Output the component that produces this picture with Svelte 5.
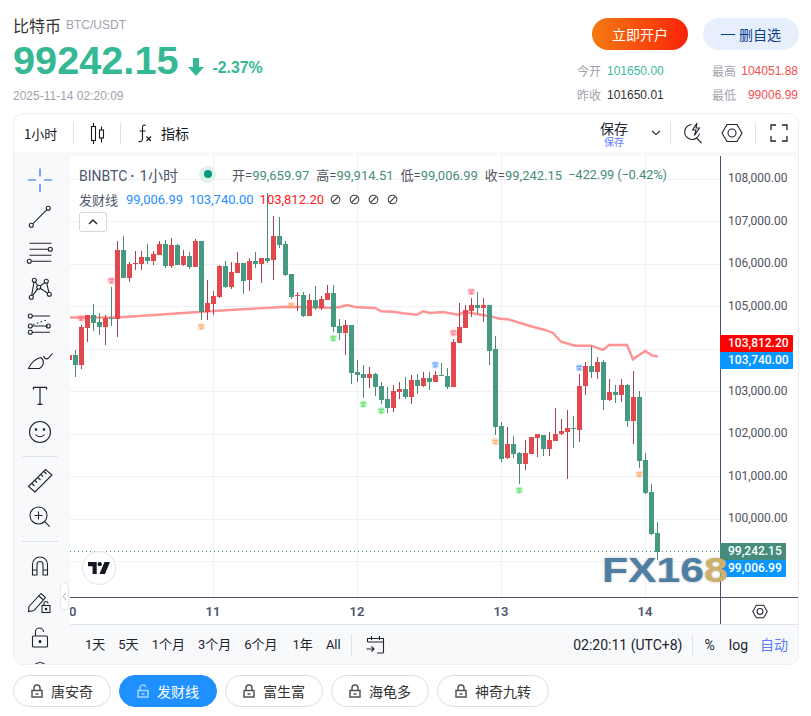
<script>
  const seg = (start, base, rows) =>
    rows.map((r, k) => ({
      x: 73 + 6 * (start + k),
      wt: base + r[0] / 3, bt: base + r[1] / 3, bb: base + r[2] / 3, wb: base + r[3] / 3,
      up: r[4] === 'r'
    }));

  const candles = [
    ...seg(-1, 200, [[465,465,480,480,'r']]),
    ...seg(0, 200, [
      [450,465,495,530,'g'],[375,381,495,506,'r'],[345,345,383,425,'r'],[312,345,369,392,'g'],
      [340,366,381,405,'g'],[345,354,381,435,'r'],[262,354,357,378,'g'],[123,150,357,411,'r'],
      [108,150,234,234,'g'],[186,192,234,246,'r'],[153,189,192,210,'r'],[153,171,192,210,'r'],
      [132,171,183,192,'g'],[153,162,183,195,'r'],[123,132,165,165,'r'],[120,132,198,204,'g'],
      [114,135,198,204,'r'],[132,135,195,195,'g'],[150,168,195,198,'r'],[156,168,201,207,'g'],
      [117,123,201,201,'r'],[123,123,336,360,'g'],[240,309,336,360,'r'],[273,288,312,345,'r'],
      [195,198,291,294,'r'],[183,198,261,264,'g'],[186,216,261,267,'r'],[156,189,219,219,'r'],
      [189,189,243,282,'g'],[174,183,240,273,'r'],[156,183,192,204,'g'],[174,174,192,249,'r'],
      [-22,174,183,189,'g'],[48,108,180,240,'r'],[51,108,135,144,'g'],[123,132,225,228,'g'],
      [222,222,291,297,'g'],[276,285,288,333,'r'],[276,285,348,351,'g'],[282,300,348,348,'r'],
      [258,300,324,330,'g'],[288,297,324,330,'r'],[255,279,300,300,'r']
    ]),
    ...seg(43, 280, [
      [15,39,141,157,'g'],[117,138,159,180,'g'],[120,135,159,225,'r'],[135,135,279,312,'g'],
      [240,276,285,306,'g'],[255,282,294,354,'g'],[261,282,294,324,'r'],[279,282,321,348,'g'],
      [306,318,360,372,'g'],[321,357,384,399,'g'],[315,333,384,396,'r'],[306,327,336,357,'r'],
      [291,327,351,357,'g'],[285,300,351,372,'r'],[282,300,318,342,'g'],[276,294,318,321,'r'],
      [276,294,306,330,'g'],[273,285,306,306,'r'],[249,285,288,288,'g'],[264,288,321,327,'g'],
      [177,186,321,321,'r'],[69,141,189,189,'r'],[75,90,144,144,'r'],[54,75,93,111,'r'],
      [36,75,84,102,'g'],[54,75,84,126,'r'],[75,75,213,255,'g'],[168,207,441,465,'g'],
      [426,438,537,546,'g'],[441,492,534,537,'r']
    ]),
    ...seg(73, 330, [
      [318,342,372,384,'g'],[366,369,402,462,'g'],[330,369,402,420,'r'],[321,321,372,372,'r'],
      [312,312,324,381,'r'],[315,315,357,378,'g'],[306,330,357,378,'r'],[234,312,333,333,'r'],
      [267,303,312,315,'r'],[240,294,306,447,'r'],[258,294,297,354,'g'],[132,168,300,336,'r'],
      [96,108,168,195,'r'],[48,108,126,144,'g'],[81,96,126,147,'r'],[90,96,210,240,'g'],
      [147,186,210,213,'r'],[165,186,195,219,'g'],[147,165,195,216,'r'],[162,165,273,291,'g'],
      [123,201,273,342,'r'],[183,201,393,414,'g'],[369,390,489,492,'g'],[462,486,612,615,'g'],
      [576,609,665,690,'g']
    ])
  ];

  const linePts = [
    [70,317.5],[117,317.5],[213,311],[287,306.7],[330,307.7],[340,307],[347,305],[357,307.3],
    [375,308],[381,311.3],[393,311.7],[403,313.3],[417,314.7],[423,311.3],[430,313],[443,312],
    [458,314.7],[465,312],[477,314],[487,315.7],[500,318.7],[508,319.3],[530,326],[545,330],
    [553,333],[561,341.7],[575,345.7],[591,345.7],[603,350],[609,345],[627,345],[633,359.3],
    [645,351],[652,355.3],[658,356.7]
  ].map((p) => p.join(',')).join(' ');

  const markers = [
    [111.3,280.7,'#ff6b7a'],[81.3,318.3,'#ff6b7a'],[453.3,332.7,'#ff6b7a'],[471.3,291.7,'#ff6b7a'],
    [201.3,326.7,'#ffa35c'],[291.3,305.3,'#ffa35c'],[495.3,441.7,'#ffa35c'],[639.3,474.3,'#ffa35c'],
    [333.3,338.3,'#4fe05a'],[363.3,404.3,'#4fe05a'],[381.3,410.7,'#4fe05a'],[519.3,490.3,'#4fe05a'],
    [435.3,364.7,'#5b9dff'],[579.3,367.7,'#5b9dff']
  ];

  const hGrid = [179, 221, 264, 306, 349, 391.5, 434, 476, 519, 561];
  const vGrid = [213, 357, 501, 645];
  const prices = ['108,000.00','107,000.00','106,000.00','105,000.00','104,000.00','103,000.00','102,000.00','101,000.00','100,000.00'];
  const days = ['10','11','12','13','14'];
  const ranges = ['1天','5天','1个月','3个月','6个月','1年','All'];
  const pills = [
    { t: '唐安奇', w: 98 }, { t: '发财线', w: 98, on: true }, { t: '富生富', w: 98 },
    { t: '海龟多', w: 98 }, { t: '神奇九转', w: 112 }
  ];
</script>

<div class="page">
  <header class="head">
    <div class="info">
      <div class="name"><span class="cn">比特币</span><span class="pair">BTC/USDT</span></div>
      <div class="quote">
        <span class="price">99242.15</span>
        <svg class="arrow" width="16" height="18" viewBox="0 0 16 18"><path d="M5 0h6v9h5l-8 9-8-9h5z" fill="#35b894"/></svg>
        <span class="chg">-2.37%</span>
      </div>
      <div class="date">2025-11-14 02:20:09</div>
    </div>
    <div class="side">
      <div class="btns">
        <button class="btn open">立即开户</button>
        <button class="btn fav"><span class="dash"></span>删自选</button>
      </div>
      <div class="stats">
        <div class="stat s1"><span class="k">今开</span><span class="teal">101650.00</span></div>
        <div class="stat s2"><span class="k">最高</span><span class="red">104051.88</span></div>
        <div class="stat s1"><span class="k">昨收</span><span class="dark">101650.01</span></div>
        <div class="stat s2 low"><span class="k">最低</span><span class="red">99006.99</span></div>
      </div>
    </div>
  </header>

  <section class="panel">
    <div class="top">
      <span class="tf">1小时</span>
      <i class="sep s-a"></i>
      <svg class="ic candle" width="18" height="22" viewBox="0 0 18 22" fill="none" stroke="#131722" stroke-width="1.1">
        <rect x="2.5" y="4.5" width="4" height="14"/><path d="M4.5 1v3.5M4.5 18.5V22"/>
        <rect x="10.5" y="8" width="4" height="8"/><path d="M12.5 4.500v3.500M12.500 16v4.500"/>
      </svg>
      <i class="sep s-b"></i>
      <svg class="ic fx" width="16" height="19" viewBox="0 0 16 19" fill="none" stroke="#131722" stroke-width="1.1">
        <path d="M8.500 1.500C6.500.500 5.500 1.500 5.500 3.500v11c0 2.500-1.500 3.500-4 3M2.500 7h6"/><path d="M9.500 12.500l4.500 4.500M14 12.500l-4.500 4.500"/>
      </svg>
      <span class="ind">指标</span>
      <span class="grow"></span>
      <div class="save"><span class="a">保存</span><span class="b">保存</span></div>
      <svg class="chev" width="10" height="6" viewBox="0 0 10 6" fill="none" stroke="#333" stroke-width="1.100"><path d="M1 1l4 3.500L9 1"/></svg>
      <i class="sep s-c"></i>
      <svg class="ic flash" width="20" height="22" viewBox="0 0 20 22" fill="none" stroke="#20232e" stroke-width="1.100">
        <path d="M8.500 2.500a7.500 7.500 0 1 0 8 9"/><path d="M13.500 16l5 5"/>
        <path d="M14 1l-4.500 7h3.500l-1.500 5.500 5-7.500h-3.500z"/>
      </svg>
      <svg class="ic hex" width="22" height="20" viewBox="0 0 22 20" fill="none" stroke="#20232e" stroke-width="1.100">
        <path d="M1 10l5-8.500h10l5 8.500-5 8.500H6z"/><circle cx="11" cy="10" r="4"/>
      </svg>
      <i class="sep s-d"></i>
      <svg class="ic full" width="18" height="18" viewBox="0 0 18 18" fill="none" stroke="#20232e" stroke-width="1.300">
        <path d="M1 6V1h5M12 1h5v5M17 12v5h-5M6 17H1v-5"/>
      </svg>
    </div>

    <div class="work">
      <aside class="tools">
        <div class="t"><svg width="28" height="28" viewBox="0 0 28 28" fill="none" stroke="#2962ff" stroke-width="1.200"><path d="M2 14h8M18 14h8M14 2.500v8M14 18v8"/></svg></div>
        <div class="t"><svg width="28" height="28" viewBox="0 0 28 28" fill="none" stroke="#20232e" stroke-width="1.100"><path d="M6.700 21.900L20.900 7.700"/><circle cx="5.300" cy="23.300" r="2"/><circle cx="22.300" cy="6.300" r="2"/></svg></div>
        <div class="t"><svg width="28" height="28" viewBox="0 0 28 28" fill="none" stroke="#20232e" stroke-width="1.100"><path d="M3.500 5.300h22M3.500 11.300h19M3.500 17.300h22M5.300 23.300h20"/><circle cx="24.300" cy="11.300" r="2"/><circle cx="3.300" cy="23.300" r="2"/></svg></div>
        <div class="t"><svg width="28" height="28" viewBox="0 0 28 28" fill="none" stroke="#20232e" stroke-width="1.100"><path d="M8.300 6.300L12.700 13.300 20.300 7.300 23.300 20.300 12.700 13.300 5.300 23.300 8.300 6.300"/><circle cx="8.300" cy="6.300" r="2" fill="#f8f9fb"/><circle cx="20.300" cy="7.300" r="2" fill="#f8f9fb"/><circle cx="12.700" cy="13.300" r="2" fill="#f8f9fb"/><circle cx="5.300" cy="23.300" r="2" fill="#f8f9fb"/><circle cx="23.300" cy="20.300" r="2" fill="#f8f9fb"/></svg></div>
        <div class="t"><svg width="28" height="28" viewBox="0 0 28 28" fill="none" stroke="#20232e" stroke-width="1.100"><path d="M6 6h18M6 16h16M6 22.300h18"/><path d="M7 14.500L22 9.500" stroke-dasharray="1.500 2.500"/><circle cx="4.300" cy="6" r="2"/><circle cx="4.300" cy="16" r="2"/><circle cx="22.300" cy="16" r="2"/><circle cx="4.300" cy="22.300" r="2"/></svg></div>
        <div class="t"><svg width="28" height="28" viewBox="0 0 28 28" fill="none" stroke="#20232e" stroke-width="1.100"><path d="M2.500 22.500C5 17 9 13 14.500 11.500c3.500 2 4.500 7-1 11z"/><path d="M17.500 10c1 3 3 3.500 5 2l4-4.500"/></svg></div>
        <div class="t"><svg width="28" height="28" viewBox="0 0 28 28" fill="none" stroke="#20232e" stroke-width="1.200"><path d="M7.500 7.500V5.300h13v2.200M14 5.300v17M11.500 22.300h5"/></svg></div>
        <div class="t"><svg width="28" height="28" viewBox="0 0 28 28" fill="none" stroke="#20232e" stroke-width="1.100"><circle cx="14" cy="14" r="10.500"/><path d="M9.500 16.500c2 3 7 3 9 0"/><circle cx="10" cy="11.500" r=".8" fill="#20232e"/><circle cx="18" cy="11.500" r=".8" fill="#20232e"/></svg></div>
        <i class="rule"></i>
        <div class="t"><svg width="28" height="28" viewBox="0 0 28 28" fill="none" stroke="#20232e" stroke-width="1.100"><path d="M2.500 19.500L19.500 2.500l6.500 5.500-17 17z"/><path d="M6 16.500l2.500 2.500M9 13.500l2 2M12 10.500l2.500 2.500M15 7.500l2 2M18 4.500l2.500 2.500"/></svg></div>
        <div class="t"><svg width="28" height="28" viewBox="0 0 28 28" fill="none" stroke="#20232e" stroke-width="1.100"><circle cx="12.500" cy="12.500" r="8.500"/><path d="M12.500 8.500v8M8.500 12.500h8M18.700 18.700l5 5"/></svg></div>
        <i class="rule"></i>
        <div class="t"><svg width="28" height="28" viewBox="0 0 28 28" fill="none" stroke="#20232e" stroke-width="1.100"><path d="M6.500 23V12.500a7.500 7.500 0 0 1 15 0V23H17V12.500a3 3 0 0 0-6 0V23z"/><path d="M6.500 18h4.500M17 18h4.500"/></svg></div>
        <div class="t"><svg width="28" height="28" viewBox="0 0 28 28" fill="none" stroke="#20232e" stroke-width="1.100"><path d="M3 18.500L15 5.500l4.500 4L8 22.500l-5.500 1z"/><path d="M13 8l4.500 4"/><rect x="16" y="17.500" width="8" height="7"/><path d="M18 17.500v-2a2 2 0 0 1 4 0"/><circle cx="20" cy="21" r=".7" fill="#20232e"/></svg></div>
        <div class="t"><svg width="28" height="28" viewBox="0 0 28 28" fill="none" stroke="#20232e" stroke-width="1.100"><rect x="6.500" y="12" width="15" height="11" rx="1"/><path d="M9.500 12V8a4 4 0 0 1 8 0"/><circle cx="14" cy="17.500" r="1" fill="#20232e"/></svg></div>
        <div class="t"><svg width="28" height="28" viewBox="0 0 28 28" fill="none" stroke="#20232e" stroke-width="1.100"><path d="M9.500 4c3-2 6-2 9 0"/></svg></div>
        <div class="handle"><svg width="5" height="9" viewBox="0 0 5 9" fill="none" stroke="#a6a9b8"><path d="M4 1L1 4.500 4 8"/></svg></div>
      </aside>

      <div class="main">
        <div class="plot">
          <div class="chart">
            <svg class="canvas" width="650" height="441" viewBox="70 156 650 441">
              <g stroke="#f0f1f4" shape-rendering="crispEdges">
                {#each hGrid as y}<line x1="70" x2="720" y1={y} y2={y}/>{/each}
                {#each vGrid as x}<line x1={x + .5} x2={x + .5} y1="156" y2="597"/>{/each}
              </g>
              <polyline points={linePts} fill="none" stroke="#ff5252" stroke-opacity=".62" stroke-width="2.400"/>
              <g shape-rendering="crispEdges">
                {#each candles as c}
                  <rect x={c.x + 2} y={c.wt} width="1" height={c.wb - c.wt} fill={c.up ? '#a4444f' : '#4a8a70'}/>
                  <rect x={c.x} y={c.bt} width="5" height={Math.max(1, c.bb - c.bt)} fill={c.up ? '#e2494f' : '#469a84'}/>
                {/each}
              </g>
              {#each markers as m}
                <rect x={m[0] - 3.500} y={m[1] - 3.500} width="7" height="7" rx="2" fill={m[2]} opacity=".35"/>
                <rect x={m[0] - 2.500} y={m[1] - 2} width="5" height="1.500" fill={m[2]} opacity=".8"/>
                <rect x={m[0] - 1.500} y={m[1] + .5} width="3" height="2" fill={m[2]} opacity=".8"/>
              {/each}
              <line x1="70" x2="720" y1="551.500" y2="551.500" stroke="#458c7c" stroke-dasharray="1 3"/>
            </svg>
            <div class="legend">
              <div class="l1">
                <span class="sym">BINBTC<b class="mid">·</b><span class="per">1小时</span></span>
                <span class="live"><b></b></span>
                <span class="ohlc">开=<em>99,659.97</em></span>
                <span class="ohlc">高=<em>99,914.51</em></span>
                <span class="ohlc">低=<em>99,006.99</em></span>
                <span class="ohlc">收=<em>99,242.15</em></span>
                <span class="ohlc last"><em>−422.99 (−0.42%)</em></span>
              </div>
              <div class="l2">
                <span class="sn">发财线</span>
                <span class="bl">99,006.99</span>
                <span class="bl">103,740.00</span>
                <span class="rd">103,812.20</span>
                {#each [0, 1, 2, 3] as k}
                  <svg class="nil" width="11" height="11" viewBox="0 0 11 11" fill="none" stroke="#444" stroke-width="1.100"><circle cx="5.500" cy="5.500" r="4.300"/><path d="M2.500 8.500l6-6"/></svg>
                {/each}
              </div>
              <div class="collapse"><svg width="10" height="6" viewBox="0 0 10 6" fill="none" stroke="#20232e" stroke-width="1.400"><path d="M1 5l4-4 4 4"/></svg></div>
            </div>
            <div class="tv">
              <svg width="22" height="12" viewBox="0 0 24 13" fill="#131722"><path d="M0 0h9.500v13H5V4.500H0z"/><circle cx="12.800" cy="2.300" r="2.300"/><path d="M18 0h6l-5.500 13H12.500z"/></svg>
            </div>
          </div>
          <div class="yaxis">
            {#each prices as p}<div class="yl">{p}</div>{/each}
            <div class="tag red-t t1">103,812.20</div>
            <div class="tag blue-t t2">103,740.00</div>
            <div class="tag green-t t3">99,242.15</div>
            <div class="tag blue-t t4">99,006.99</div>
          </div>
          <div class="logo"><span>FX16</span><span class="gold">8</span></div>
        </div>
        <div class="xrow">
          <div class="xaxis">
            <div class="xin">{#each days as d}<span>{d}</span>{/each}</div>
          </div>
          <div class="xset">
            <svg width="16" height="15" viewBox="0 0 22 20" fill="none" stroke="#20232e" stroke-width="1.400"><path d="M1 10l5-8.500h10l5 8.500-5 8.500H6z"/><circle cx="11" cy="10" r="4"/></svg>
          </div>
        </div>
        <div class="bar">
          <div class="rng">{#each ranges as r}<span>{r}</span>{/each}</div>
          <i class="sep s-e"></i>
          <svg class="cal" width="19" height="19" viewBox="0 0 19 19" fill="none" stroke="#20232e" stroke-width="1.100">
            <path d="M1.500 7V3.500h16V17a1 1 0 0 1-1 1H11M1.500 7h16M5.500 1v4M13.500 1v4"/><path d="M.5 14h7M5.500 11.500L8 14l-2.500 2.500"/>
          </svg>
          <span class="grow"></span>
          <span class="clock">02:20:11 (UTC+8)</span>
          <i class="sep s-f"></i>
          <span class="pct">%</span>
          <span class="log">log</span>
          <span class="auto">自动</span>
        </div>
      </div>
    </div>
  </section>

  <nav class="pills">
    {#each pills as p, i}
      <button class="pill" class:on={p.on} style={`width:${p.w}px`}>
        {#if p.on}
          <svg width="12" height="14" viewBox="0 0 12 14" fill="none" stroke="#a9d6ff" stroke-width="1.500"><rect x="1" y="6.500" width="10" height="6.500"/><path d="M3 6.500V4a3 3 0 0 1 5.800-1"/><path d="M4.500 10h3"/></svg>
        {:else}
          <svg width="12" height="14" viewBox="0 0 12 14" fill="none" stroke="#555" stroke-width="1.500"><rect x="1" y="6.500" width="10" height="6.500"/><path d="M3 6.500V4a3 3 0 0 1 6 0v2.500"/><path d="M4.500 10h3"/></svg>
        {/if}
        <span>{p.t}</span>
      </button>
    {/each}
  </nav>
</div>

<style>
  :global(body) { margin: 0; background: #fff; }
  .page {
    width: 811px; height: 716px; overflow: hidden; box-sizing: border-box; padding: 0 12px 0 13px;
    font-family: "Liberation Sans", "Noto Sans CJK SC", sans-serif; color: #333;
  }
  .head { height: 113px; display: flex; justify-content: space-between; }
  .name { margin-top: 15px; height: 20px; display: flex; align-items: center; }
  .cn { font-size: 16px; color: #333; font-family: "Noto Sans CJK SC", sans-serif; }
  .pair { margin-left: 5px; font-size: 12px; color: #a0a3b2; }
  .quote { height: 46px; margin-top: 2px; display: flex; align-items: center; }
  .price { font-size: 39.700px; font-weight: 700; color: #35b894; line-height: 46px; }
  .arrow { margin-left: 9px; margin-top: 14px; }
  .chg { margin-left: 9px; margin-top: 15px; font-size: 15.800px; font-weight: 700; color: #35b894; }
  .date { margin-top: 6px; font-size: 12px; color: #a0a3ad; line-height: 14px; }

  .side { width: 222px; }
  .btns { margin-top: 18px; display: flex; justify-content: flex-end; gap: 15px; }
  .btn {
    width: 96px; height: 32px; border: 0; border-radius: 16px; padding: 0; font-size: 14px;
    font-family: "Noto Sans CJK SC", sans-serif; display: flex; align-items: center; justify-content: center;
  }
  .open { background: linear-gradient(90deg, #f47a12, #f9240a); color: #fff; }
  .fav { background: #e8effc; color: #0c3f8f; }
  .dash { width: 14px; height: 1px; background: #0c3f8f; margin-right: 4px; }
  .stats { margin-top: 13px; display: grid; grid-template-columns: 135px 86px; row-gap: 8px; }
  .stat { display: flex; font-size: 12px; line-height: 16px; white-space: nowrap; }
  .stat .k { width: 30px; color: #a0a3ad; font-family: "Noto Sans CJK SC", sans-serif; }
  .s2 { justify-content: flex-end; }
  .low .k { margin-right: 6px; }
  .teal { color: #3cbc9b; } .red { color: #f05050; } .dark { color: #333; }

  .panel {
    width: 786px; height: 552px; box-sizing: border-box; border: 1px solid #eceef2; border-radius: 10px;
    overflow: hidden; background: #fff; display: flex; flex-direction: column;
  }
  .top { height: 38px; flex: none; display: flex; align-items: center; position: relative; color: #131722; }
  .sep { width: 1px; height: 22px; background: #e0e3eb; flex: none; display: block; }
  .tf { margin-left: 10px; font-size: 13px; font-family: "Noto Sans CJK SC", sans-serif; width: 34px; white-space: nowrap; }
  .s-a { margin-left: 15px; }
  .candle { margin-left: 15px; }
  .s-b { margin-left: 13px; }
  .fx { margin-left: 16px; }
  .ind { margin-left: 8px; font-size: 14px; font-family: "Noto Sans CJK SC", sans-serif; }
  .grow { flex: 1; }
  .save { display: flex; flex-direction: column; align-items: center; width: 30px; font-family: "Noto Sans CJK SC", sans-serif; }
  .save .a { font-size: 14px; line-height: 16px; color: #20232e; margin-top: 1px; }
  .save .b { font-size: 10px; line-height: 12px; color: #5e7bff; }
  .chev { margin-left: 22px; }
  .s-c { margin-left: 9px; }
  .flash { margin-left: 12px; }
  .hex { margin-left: 18px; }
  .s-d { margin-left: 12px; }
  .full { margin-left: 14px; margin-right: 10px; }

  .work { flex: 1; display: flex; min-height: 0; background: #f8f9fb; padding-top: 4px; }
  .tools { width: 56px; flex: none; overflow: hidden; padding-top: 6px; box-sizing: border-box; display: flex; flex-direction: column; align-items: center; position: relative; }
  .t { height: 36px; flex: none; width: 100%; display: flex; align-items: center; justify-content: center; }
  .t svg { margin-left: -4px; }
  .rule { flex: none; display: block; width: 36px; height: 1px; background: #e0e3eb; margin: 6px 4px 6px 0; }
  .handle {
    position: absolute; left: 46px; top: 427px; width: 9px; height: 27px; background: #fff; border: 1px solid #e6e8ee;
    border-radius: 4px; box-sizing: border-box; display: flex; align-items: center; justify-content: center;
  }
  .main { flex: 1; display: flex; flex-direction: column; min-width: 0; background: #fff; }
  .plot { height: 441px; display: flex; position: relative; flex: none; }
  .chart { width: 650px; height: 441px; position: relative; overflow: hidden; flex: none; }
  .canvas { display: block; }
  .legend { position: absolute; left: 9px; top: 8px; font-family: Roboto, "Noto Sans CJK SC", sans-serif; font-size: 13px; color: #50535e; white-space: nowrap; }
  .l1 { display: flex; align-items: center; height: 20px; }
  .sym { font-size: 14px; color: #50556e; width: 111px; display: flex; align-items: baseline; }
  .mid { font-weight: 700; margin: 0 5px 0 3px; }
  .per { font-size: 15px; }
  .live { width: 17px; height: 17px; border-radius: 50%; background: #dff2ec; display: flex; align-items: center; justify-content: center; margin-left: 9px; margin-right: 16px; }
  .live b { width: 8px; height: 8px; border-radius: 50%; background: #089981; display: block; }
  .ohlc { margin-right: 7px; color: #50535e; }
  .ohlc em { font-style: normal; color: #458c7c; }
  .ohlc.last { letter-spacing: -.2px; margin-left: -1px; }
  .l2 { display: flex; align-items: center; height: 20px; margin-top: 5px; }
  .sn { width: 47px; color: #50556e; }
  .bl { color: #1e90ff; margin-right: 6px; }
  .rd { color: #ff2020; margin-right: 6px; }
  .nil { margin-right: 8px; }
  .collapse {
    width: 28px; height: 20px; margin-top: 3px; box-sizing: border-box; border: 1px solid #d5d7e2; border-radius: 3px;
    display: flex; align-items: center; justify-content: center; background: #fff;
  }
  .tv {
    position: absolute; left: 12px; top: 395px; width: 34px; height: 34px; box-sizing: border-box; border: 1px solid #e0e3eb; border-radius: 50%;
    background: #fff; display: flex; align-items: center; justify-content: center;
  }
  .yaxis {
    width: 78px; flex: none; box-sizing: border-box; border-left: 1.500px solid #4a5070; position: relative; padding-top: 1px;
    font-family: Roboto, sans-serif; font-size: 12px; color: #50535e;
  }
  .yl { height: 42.500px; line-height: 42.500px; padding-left: 7px; white-space: nowrap; }
  .tag { position: absolute; left: -1px; width: 73px; height: 17px; line-height: 17px; color: #fff; font-size: 12px; font-weight: 500; box-sizing: border-box; padding-left: 8px; border-radius: 0 1px 1px 0; }
  .t1 { top: 179px; } .t2 { top: 196px; } .t3 { top: 387px; width: 66px; } .t4 { top: 404px; width: 66px; }
  .red-t { background: #ff0000; } .blue-t { background: #0a96ff; } .green-t { background: #458c7c; }
  .logo {
    position: absolute; left: 532px; top: 396px; font-family: "Liberation Sans", sans-serif; font-weight: 700; font-size: 35px; line-height: 36px;
    color: #4f7ea3; transform: scaleX(1.220); transform-origin: left top; white-space: nowrap; text-shadow: 0 0 2px rgba(90,90,90,.5); letter-spacing: 0;
  }
  .gold { color: #cdb069; }
  .xrow { height: 28px; flex: none; display: flex; border-top: 1.500px solid #4a5070; border-bottom: 1px solid #e0e3eb; box-sizing: border-box; }
  .xaxis { width: 650px; flex: none; overflow: hidden; position: relative; }
  .xin { display: flex; margin-left: -73px; height: 100%; align-items: center; }
  .xin span { width: 144px; flex: none; text-align: center; font-family: Roboto, sans-serif; font-size: 13px; font-weight: 600; color: #50556e; }
  .xset { flex: 1; border-left: 1.500px solid #4a5070; display: flex; align-items: center; justify-content: center; }
  .bar { flex: 1; display: flex; align-items: center; background: #f8f9fb; font-family: Roboto, "Noto Sans CJK SC", sans-serif; font-size: 13px; color: #20232e; }
  .rng { display: flex; gap: 13px; margin-left: 15px; white-space: nowrap; align-items: center; }
  .rng span { line-height: 18px; height: 18px; display: block; }
  .rng span:nth-child(6) { margin-left: 2px; }
  .s-e { margin-left: 10px; }
  .cal { margin-left: 14px; }
  .clock { white-space: nowrap; font-size: 14px; line-height: 18px; }
  .s-f { margin-left: 10px; }
  .pct { margin-left: 11px; font-size: 14px; line-height: 18px; }
  .log { margin-left: 14px; font-size: 14px; line-height: 18px; }
  .auto { margin-left: 12px; margin-right: 10px; font-size: 14px; line-height: 18px; color: #5e7bff; }

  .pills { display: flex; gap: 8px; margin-top: 10px; }
  .pill {
    height: 32px; box-sizing: border-box; border: 1px solid #ddd; border-radius: 16px; background: #fff; padding: 0 0 0 17px;
    display: flex; align-items: center; gap: 8px; font-family: "Noto Sans CJK SC", sans-serif; font-size: 14px; color: #333; white-space: nowrap;
  }
  .pill.on { background: #1e90ff; border-color: #1e90ff; color: #fff; }
</style>
